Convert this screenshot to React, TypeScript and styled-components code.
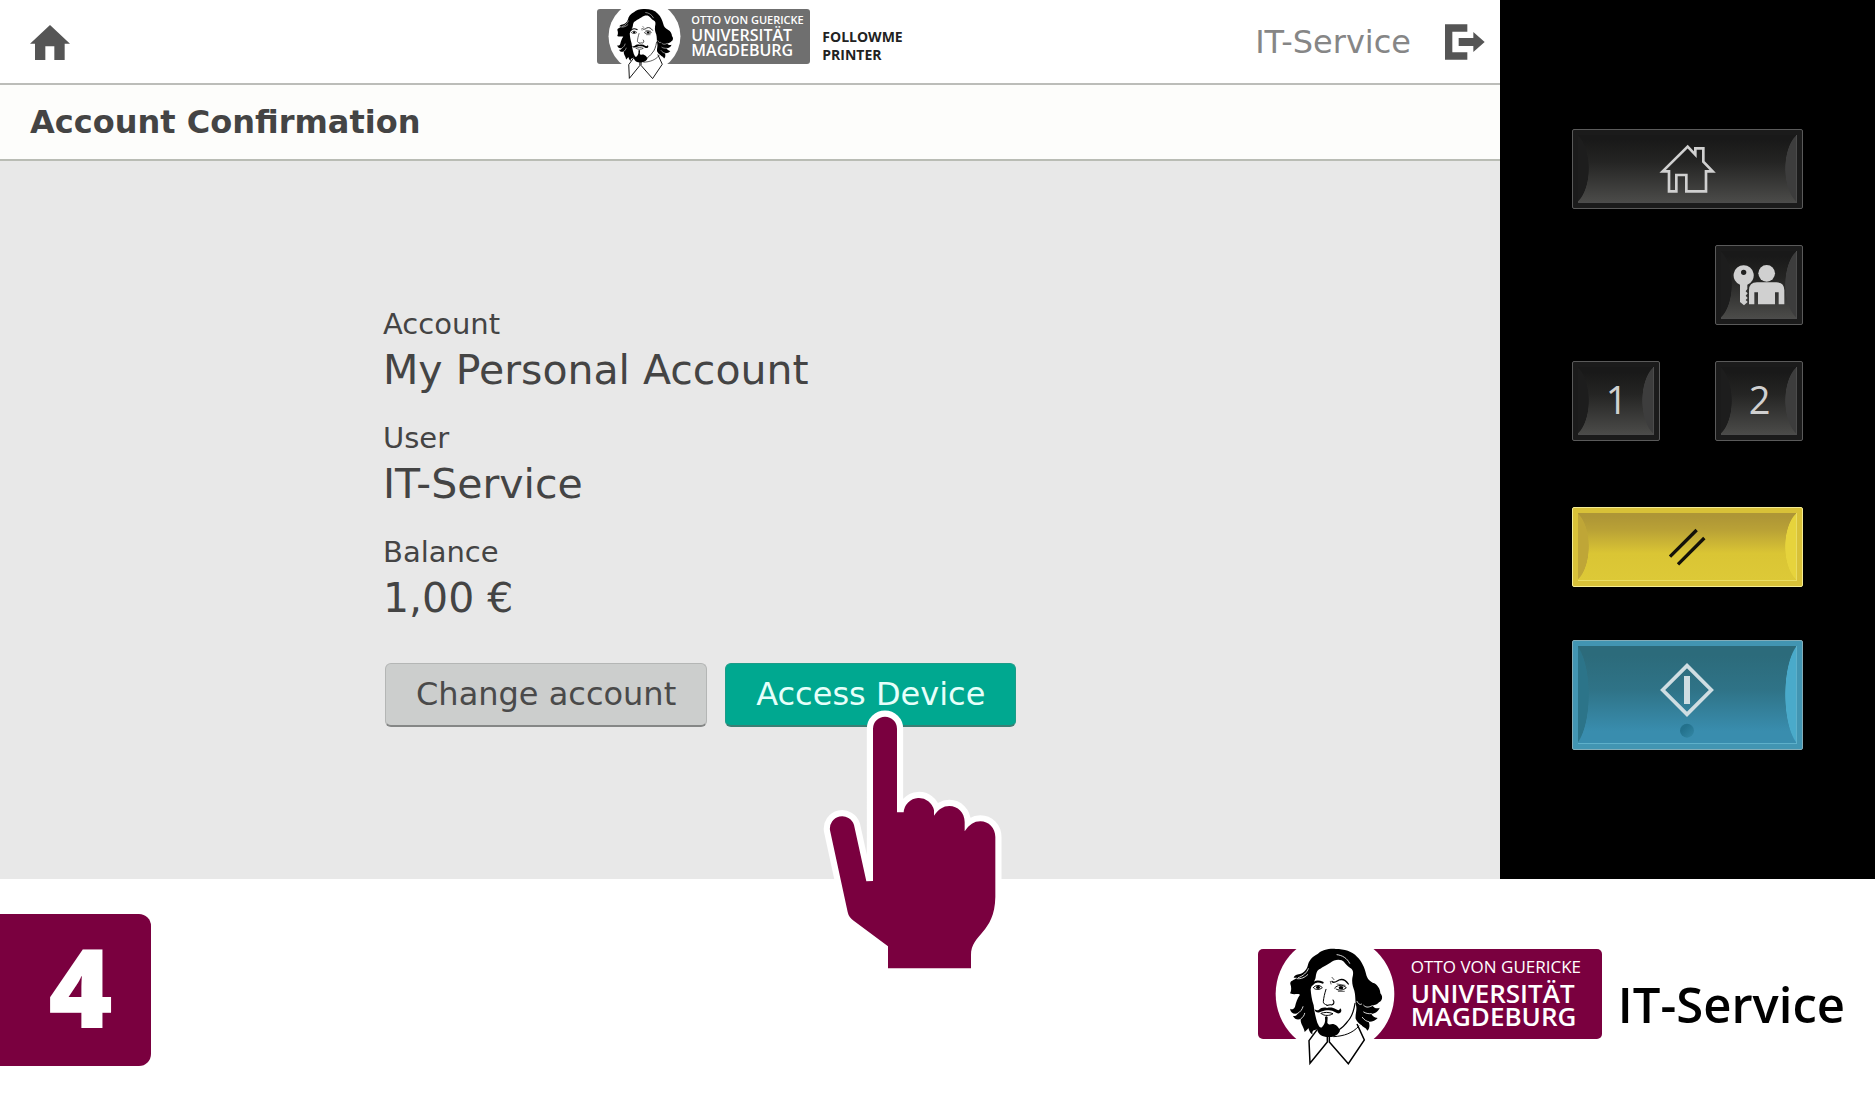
import React from 'react';
import styled, { createGlobalStyle, css } from 'styled-components';

const wine = '#7a003f';
const uiFont = '"DejaVu Sans", Verdana, sans-serif';
const brandFont = '"Open Sans", "Noto Sans", sans-serif';

const GlobalStyle = createGlobalStyle`
  *, *::before, *::after { box-sizing: border-box; }
  body { margin: 0; background: #fff; font-family: ${uiFont}; }
  h1, p, dl, dd { margin: 0; }
  button { font: inherit; cursor: pointer; }
  svg { display: block; flex: none; }
`;

const Device = styled.div`
  display: grid;
  grid-template-columns: 4fr 1fr;
`;

const Screen = styled.main`
  display: flex;
  flex-direction: column;
  background: #e8e8e8;
`;

const TopBar = styled.header`
  display: grid;
  grid-template-columns: 1fr auto 1fr;
  align-items: center;
  height: 85px;
  padding: 0 15px 0 30px;
  background: #fff;
  border-bottom: 2px solid #bcbdb9;
`;

const Nav = styled.nav`
  display: flex;
  padding-top: 2px;
`;

const IconButton = styled.button`
  padding: 0;
  border: 0;
  background: none;
  color: #555;
`;

const HeaderBrand = styled.div`
  display: flex;
  align-items: center;
  gap: 12px;
  margin-top: -10px;
  margin-right: 15px;
`;

const Product = styled.p`
  padding-top: 18px;
  font: 700 14px/18px ${brandFont};
  color: #222;
`;

const Session = styled.div`
  display: flex;
  justify-content: flex-end;
  align-items: center;
  gap: 34px;
  font-size: 32px;
  line-height: 40px;
  color: #868686;
`;

const TitleBar = styled.div`
  padding: 17px 30px;
  background: #fdfdfb;
  border-bottom: 2px solid #b9bcb4;
`;

const Title = styled.h1`
  font-size: 32px;
  line-height: 40px;
  color: #444;
`;

const Content = styled.section`
  flex: 1;
  padding: 143px 24px 0 calc(25% + 8px);
  color: #444;
`;

const Details = styled.dl`
  display: grid;
  gap: 22px;
`;

const Label = styled.dt`
  font-size: 29px;
  line-height: 40px;
`;

const Value = styled.dd`
  font-size: 41px;
  line-height: 52px;
`;

const Actions = styled.div`
  display: flex;
  gap: 18px;
  margin-top: 39px;
  padding-left: 2px;
`;

const ActionSlot = styled.div`
  position: relative;
`;

const ActionButton = styled.button<{ $primary?: boolean }>`
  height: 64px;
  padding: 0 30px 2px;
  border: 1px solid ${p => (p.$primary ? '#1b9c88' : '#b4b6b5')};
  border-bottom: 2px solid ${p => (p.$primary ? '#3b7f74' : '#858786')};
  border-radius: 6px;
  background: ${p => (p.$primary ? '#00a890' : '#cccecd')};
  color: ${p => (p.$primary ? '#e6fffa' : '#4a4a4a')};
  font-size: 32px;
  line-height: 40px;
  white-space: nowrap;
`;

const Pointer = styled.svg`
  position: absolute;
  left: 97px;
  top: 46px;
  z-index: 2;
  pointer-events: none;
`;

const Panel = styled.aside`
  display: flex;
  flex-direction: column;
  padding: 129px 72px;
  background: #000;
`;

const KeyRow = styled.div<{ $gap?: number; $end?: boolean }>`
  display: flex;
  justify-content: ${p => (p.$end ? 'flex-end' : 'space-between')};
  margin-top: ${p => p.$gap ?? 0}px;
`;

const tones = {
  dark: {
    edge: '#5a5a5a', frame: '#1b1b1b', line: '#4c4c4c', ink: '#d0d0d0',
    face: 'linear-gradient(#191919 8%, #242423 40%, #4b4b49)',
    left: '#1d1d1d', right: '#3d3d3d',
  },
  yellow: {
    edge: '#f5ec92', frame: '#d8c138', line: '#e9dc62', ink: '#14120a',
    face: 'linear-gradient(#ae9636 5%, #b9a136 25%, #dac534 60%, #ddc937)',
    left: '#bfa637', right: '#e6d33c',
  },
  blue: {
    edge: '#83adb9', frame: '#4295b2', line: '#5eb0ca', ink: '#cfdde2',
    face: 'linear-gradient(#2c6b7b 10%, #2f7387 45%, #398dae 88%)',
    left: '#2c7489', right: '#4aaaca',
  },
};

const Key = styled.button<{ $tone?: keyof typeof tones; $wide?: boolean; $tall?: boolean }>`
  ${({ $tone = 'dark', $wide, $tall }) => {
    const t = tones[$tone];
    return css`
      display: flex;
      width: ${$wide ? '100%' : '88px'};
      height: ${$tall ? 110 : 80}px;
      padding: 5px;
      border: 1px solid ${t.edge};
      border-radius: 2px;
      background: ${t.frame};
      color: ${t.ink};
      font: 400 38px/52px ${brandFont};

      & > span {
        flex: 1;
        align-self: stretch;
        display: flex;
        align-items: center;
        justify-content: center;
        border-right: 1px solid ${t.line};
        border-bottom: 1px solid ${t.line};
        background:
          radial-gradient(ellipse 20px 56% at -9px 50%, ${t.left} 97%, transparent),
          radial-gradient(ellipse 20px 56% at calc(100% + 9px) 50%, ${t.right} 97%, transparent),
          ${t.face};
      }
    `;
  }}
`;

const Digit = styled.b`
  padding: 0 0 3px 2px;
  font-weight: 400;
`;

const Footer = styled.footer`
  display: flex;
  justify-content: space-between;
  align-items: flex-start;
  padding: 35px 30px 28px 0;
  background: #fff;
`;

const Step = styled.div`
  display: flex;
  align-items: center;
  justify-content: center;
  width: 151px;
  height: 152px;
  padding: 0 0 10px 10px;
  border-radius: 0 12px 12px 0;
  background: ${wine};
  color: #fff;
  font: 800 110px/120px ${brandFont};
`;

const Department = styled.div`
  display: flex;
  align-items: flex-end;
  gap: 16px;
  padding-top: 35px;
`;

const DepartmentName = styled.p`
  font: 600 49px/70px ${brandFont};
  color: #000;
`;

const Banner = styled.div<{ $compact?: boolean }>`
  position: relative;
  width: ${p => (p.$compact ? 213 : 344)}px;
  height: ${p => (p.$compact ? 55 : 90)}px;
  padding: ${p => (p.$compact ? '4px 0 0 94px' : '7px 0 0 153px')};
  border-radius: ${p => (p.$compact ? 3 : 5)}px;
  background: ${p => (p.$compact ? '#6f6f6f' : wine)};
  color: #fff;
  font-family: ${brandFont};
  white-space: nowrap;
`;

const Founder = styled.p<{ $compact?: boolean }>`
  margin-bottom: ${p => (p.$compact ? 1 : 4)}px;
  font-size: ${p => (p.$compact ? 11 : 17)}px;
  line-height: ${p => (p.$compact ? 14 : 22)}px;
  font-weight: ${p => (p.$compact ? 600 : 500)};
`;

const School = styled.p<{ $compact?: boolean }>`
  font-size: ${p => (p.$compact ? 16 : 26)}px;
  line-height: ${p => (p.$compact ? 15 : 23)}px;
  font-weight: 600;
`;

const PortraitArt = styled.svg<{ $compact?: boolean }>`
  position: absolute;
  left: ${p => (p.$compact ? 11 : 17)}px;
  top: ${p => (p.$compact ? -9 : -15)}px;
  width: ${p => (p.$compact ? 73 : 120)}px;
  height: ${p => (p.$compact ? 80 : 132)}px;
`;

function Portrait({ compact }: { compact?: boolean }) {
  return (
    <PortraitArt $compact={compact} viewBox="30 -18 360 396" aria-hidden="true">
      <circle cx="210" cy="162" r="178" fill="#fff" />
      {/* collar */}
      <g fill="#fff" stroke="#000" strokeWidth="4.5" strokeLinejoin="miter">
        <path d="M157 268 L132 302 L135 370 L187 306 L187 286" />
        <path d="M193 288 L193 306 L250 371 L298 300 L276 252" />
      </g>
      {/* hair */}
      <path
        d="M212 27 C192 25 170 31 159 41 C141 50 131 62 128 78 C124 92 112 101 101 103 C92 104 87 108 86 113
        L96 113 C88 121 74 121 76 132 C80 142 79 153 75 160 C86 165 98 160 105 164 C97 174 93 187 90 200
        C86 208 80 209 75 206 C77 219 88 224 99 219 C95 227 90 229 84 228 C89 239 99 240 107 237
        C106 253 117 260 119 276 C125 270 128 268 130 264 C133 276 138 281 143 284 C140 275 144 271 150 270
        C160 268 160 255 156 245 C152 232 148 214 146 196 C140 178 138 162 137 148 C141 132 150 124 152 112
        C154 98 156 90 166 86 C174 79 184 76 196 68 C205 60 220 57 230 61 C240 66 244 78 256 84
        C267 90 265 102 262 114 C260 130 264 140 268 152 C272 166 270 180 273 196 C277 210 270 222 272 236
        C276 246 284 252 290 256 C294 262 302 262 307 272 C314 266 315 254 311 245 C320 246 332 242 338 234
        C330 234 322 228 319 221 C331 221 341 213 344 203 C336 207 328 204 322 197 C330 194 338 194 342 187
        C353 182 354 168 346 160 C346 147 338 136 328 130 C314 124 306 116 303 101 C299 84 291 64 276 50
        C262 34 238 27 212 27 Z"
      />
      {/* strands of light in the hair */}
      <g fill="none" stroke="#fff" strokeWidth="2.5" strokeLinecap="round">
        <path d="M216 44 C232 46 246 54 254 70" />
        <path d="M130 86 C126 98 114 108 100 113" />
        <path d="M96 116 C108 118 120 112 128 104" />
        <path d="M98 220 C106 216 112 208 114 200" />
        <path d="M107 237 C114 232 118 226 119 220" />
        <path d="M296 196 C302 202 308 204 322 197" />
        <path d="M296 216 C302 220 310 222 319 221" />
        <path d="M292 232 C298 240 304 244 311 245" />
        <path d="M276 184 C280 192 286 196 290 192" />
      </g>
      {/* brows, eyes and nose */}
      <g fill="none" stroke="#000" strokeLinecap="round" strokeLinejoin="round">
        <path d="M141 134 C148 124 160 122 173 128" strokeWidth="6" />
        <path d="M201 124 C206 132 214 124 222 120 C232 116 242 120 250 132" strokeWidth="4" />
        <path d="M145 143 C152 134 164 134 172 143 C164 150 152 150 147 145" strokeWidth="3" />
        <path d="M209 144 C218 134 232 133 244 143 C234 152 220 152 213 147" strokeWidth="3" />
        <path d="M216 132 L240 136 M220 154 L238 154" strokeWidth="2" />
        <path d="M183 148 C179 160 176 174 175 184 C174 191 180 193 185 195" strokeWidth="3" />
        <path d="M204 180 C209 186 207 193 200 195 C195 192 190 197 186 196" strokeWidth="3.5" />
        <path d="M196 124 L198 132 M201 112 L207 119" strokeWidth="2" />
        <path d="M270 190 C266 214 260 232 248 244 C240 256 230 264 218 272" strokeWidth="3.5" />
        <path d="M282 258 C262 280 238 288 206 290" strokeWidth="3" />
        <path d="M168 220 C178 216 192 216 204 221 C194 228 178 228 170 222" strokeWidth="3" />
      </g>
      <ellipse cx="159" cy="142" rx="6" ry="5" />
      <ellipse cx="228" cy="143" rx="7" ry="5" />
      {/* moustache */}
      <path
        d="M186 204 C176 201 168 204 162 209 C158 212 153 211 149 208 C150 216 156 219 164 217 C172 214 180 210 187 211
        C196 210 204 212 211 217 C219 223 228 220 229 212 C229 209 228 207 225 205 C225 211 219 212 213 208
        C205 203 196 201 186 204 Z"
      />
      {/* beard */}
      <path
        d="M180 232 C182 228 186 228 188 232 L187 249 C194 258 198 250 207 253 C217 256 221 264 225 272
        C221 284 207 292 190 291 C172 291 160 284 157 270 C152 262 154 256 158 250 C162 262 168 266 172 260
        C178 254 182 246 180 232 Z"
      />
    </PortraitArt>
  );
}

function UniversityLogo({ compact }: { compact?: boolean }) {
  return (
    <Banner $compact={compact}>
      <Portrait compact={compact} />
      <Founder $compact={compact}>OTTO VON GUERICKE</Founder>
      <School $compact={compact}>
        UNIVERSITÄT
        <br />
        MAGDEBURG
      </School>
    </Banner>
  );
}

const details = [
  { label: 'Account', value: 'My Personal Account' },
  { label: 'User', value: 'IT-Service' },
  { label: 'Balance', value: '1,00 €' },
];

export default function App() {
  return (
    <>
      <GlobalStyle />
      <Device>
        <Screen>
          <TopBar>
            <Nav>
              <IconButton aria-label="Home">
                <svg width="40" height="35" viewBox="90 75 120 105" fill="currentColor">
                  <path d="M150 75L210 131H194V180H163V139H136V180H105V131H90Z" />
                </svg>
              </IconButton>
            </Nav>
            <HeaderBrand>
              <UniversityLogo compact />
              <Product>
                FOLLOWME
                <br />
                PRINTER
              </Product>
            </HeaderBrand>
            <Session>
              <span>IT-Service</span>
              <IconButton aria-label="Log out">
                <svg width="40" height="36" viewBox="677 73 120 108" fill="currentColor">
                  <path d="M677 74H744V96H699V158H744V180H677Z" />
                  <path d="M718 115H762V97L796 127L762 157V139H718Z" />
                </svg>
              </IconButton>
            </Session>
          </TopBar>
          <TitleBar>
            <Title>Account Confirmation</Title>
          </TitleBar>
          <Content>
            <Details>
              {details.map(d => (
                <div key={d.label}>
                  <Label>{d.label}</Label>
                  <Value>{d.value}</Value>
                </div>
              ))}
            </Details>
            <Actions>
              <ActionButton>Change account</ActionButton>
              <ActionSlot>
                <ActionButton $primary>Access Device</ActionButton>
                <Pointer width="182" height="261" viewBox="66 206 546 783" aria-hidden="true">
                  <path
                    d="M264 984V918L162 842Q146 831 143 815L90 570A37 37 0 0 1 162 554L199 723L219 722V265
                    A36 36 0 0 1 291 265V516H311A46 46 0 0 1 402 510V526C415 507 430 497 448 497
                    C473 497 494 517 494 545V573C508 553 522 543 541 543C566 543 586 563 586 590V770
                    C584 880 513 880 513 945V984Z"
                    fill={wine}
                    stroke="#fff"
                    strokeWidth="37"
                    strokeLinejoin="round"
                    paintOrder="stroke"
                  />
                </Pointer>
              </ActionSlot>
            </Actions>
          </Content>
        </Screen>
        <Panel>
          <KeyRow>
            <Key $wide aria-label="Home">
              <span>
                <svg width="57" height="49" viewBox="329 105 171 147" fill="none" stroke="currentColor" strokeWidth="8">
                  <path d="M415 113L438 137V118H462V158L490 187H470V247H411V198H381V247H359V187H340Z" />
                </svg>
              </span>
            </Key>
          </KeyRow>
          <KeyRow $gap={36} $end>
            <Key aria-label="User login">
              <span>
                <svg width="52" height="42" viewBox="550 463 156 126" fill="currentColor">
                  <path
                    fillRule="evenodd"
                    d="M582 467A30 30 0 0 1 593 525V538L588 545L594 551L588 558L594 565L588 571L594 577L583 587L571 577V525A30 30 0 0 1 582 467Z
                    M582 480A8 8 0 1 0 582 496A8 8 0 1 0 582 480Z"
                  />
                  <circle cx="651" cy="491" r="25" />
                  <path d="M598 584V542Q598 518 622 518H680Q704 518 704 542V584H687V548H676V584H625V548H614V584Z" />
                </svg>
              </span>
            </Key>
          </KeyRow>
          <KeyRow $gap={36}>
            <Key><span><Digit>1</Digit></span></Key>
            <Key><span><Digit>2</Digit></span></Key>
          </KeyRow>
          <KeyRow $gap={66}>
            <Key $wide $tone="yellow" aria-label="Reset">
              <span>
                <svg width="38" height="38" viewBox="355 114 114 114" stroke="currentColor" strokeWidth="10">
                  <path d="M361 200L441 120M385 223L464 144" />
                </svg>
              </span>
            </Key>
          </KeyRow>
          <KeyRow $gap={53}>
            <Key $wide $tall $tone="blue" aria-label="Start">
              <span>
                <svg width="54" height="88" viewBox="331 483 162 264" fill="none">
                  <defs>
                    <linearGradient id="lamp" x1="0" y1="0" x2="1" y2="1">
                      <stop offset="0.3" stopColor="#23718c" />
                      <stop offset="1" stopColor="#3488a6" />
                    </linearGradient>
                  </defs>
                  <path d="M412 527L485 600L412 673L339 600Z" stroke="currentColor" strokeWidth="11" />
                  <rect x="403" y="558" width="18" height="84" fill="currentColor" />
                  <circle cx="412" cy="722" r="21" fill="url(#lamp)" />
                </svg>
              </span>
            </Key>
          </KeyRow>
        </Panel>
      </Device>
      <Footer>
        <Step>4</Step>
        <Department>
          <UniversityLogo />
          <DepartmentName>IT-Service</DepartmentName>
        </Department>
      </Footer>
    </>
  );
}
